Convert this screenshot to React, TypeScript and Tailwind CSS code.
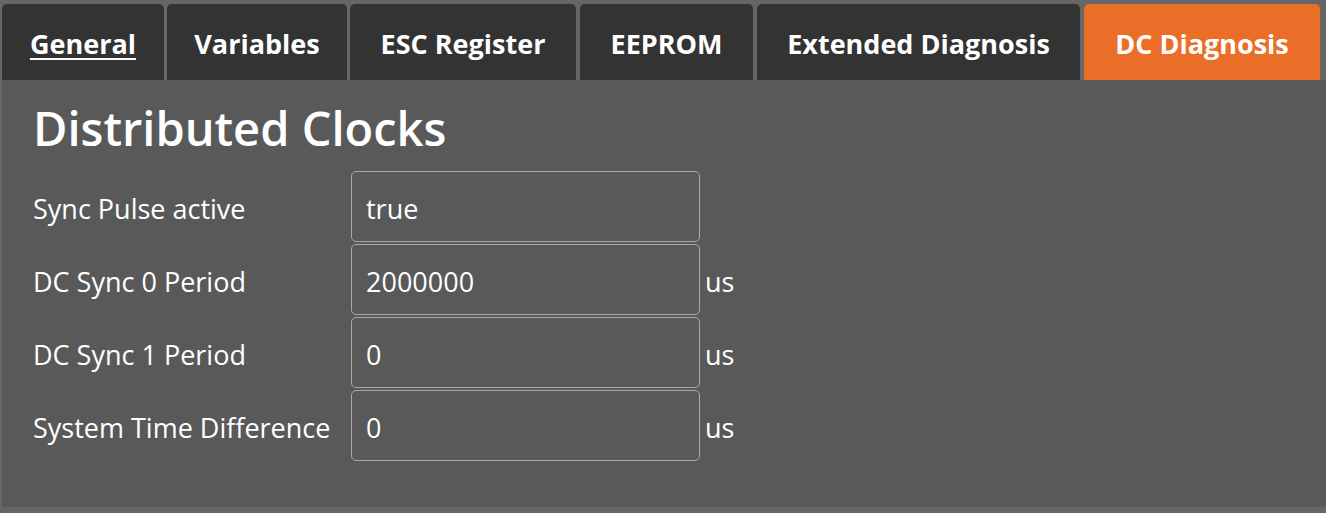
import React from "react";

const tabs = [
  { label: "General", cls: "w-[162px]", underline: true },
  { label: "Variables", cls: "ml-[3px] w-[180px]" },
  { label: "ESC Register", cls: "ml-[3px] w-[226px]" },
  { label: "EEPROM", cls: "ml-[4px] w-[173px]" },
  { label: "Extended Diagnosis", cls: "ml-[4px] w-[323px]" },
  { label: "DC Diagnosis", cls: "ml-[4px] w-[236px]", active: true },
];

const rows = [
  { label: "Sync Pulse active", value: "true", unit: "" },
  { label: "DC Sync 0 Period", value: "2000000", unit: "us" },
  { label: "DC Sync 1 Period", value: "0", unit: "us" },
  { label: "System Time Difference", value: "0", unit: "us" },
];

export default function App() {
  return (
    <div
      className="h-[513px] w-[1326px] overflow-hidden bg-[#666666] pl-[2px] pt-[4px] text-white"
      style={{ fontFamily: '"Open Sans", "Noto Sans", sans-serif' }}
    >
      <div className="flex h-[76px]">
        {tabs.map((t) => (
          <div
            key={t.label}
            className={`flex shrink-0 items-center justify-center rounded-t-[5px] pt-[4px] text-[27px] font-bold ${t.cls} ${
              t.active ? "bg-[#eb6e28]" : "bg-[#333333]"
            }`}
          >
            <span className={t.underline ? "underline decoration-2 underline-offset-4" : ""}>{t.label}</span>
          </div>
        ))}
      </div>

      <div className="h-[427px] bg-[#595959] pl-[31px] pt-[16px]">
        <h1 className="mb-[12px] pt-[1px] text-[47px] font-semibold leading-[62px]">Distributed Clocks</h1>
        <div className="flex flex-col gap-[2px]">
          {rows.map((r) => (
            <div key={r.label} className="flex h-[71px] items-center">
              <div className="w-[318px] pt-[5px] text-[27px]">{r.label}</div>
              <div className="flex h-full w-[349px] items-center rounded-[5px] border border-[#a8a8a8] pl-[14px] pt-[5px] text-[27px]">
                {r.value}
              </div>
              <div className="pl-[5px] pt-[5px] text-[27px]">{r.unit}</div>
            </div>
          ))}
        </div>
      </div>
    </div>
  );
}
